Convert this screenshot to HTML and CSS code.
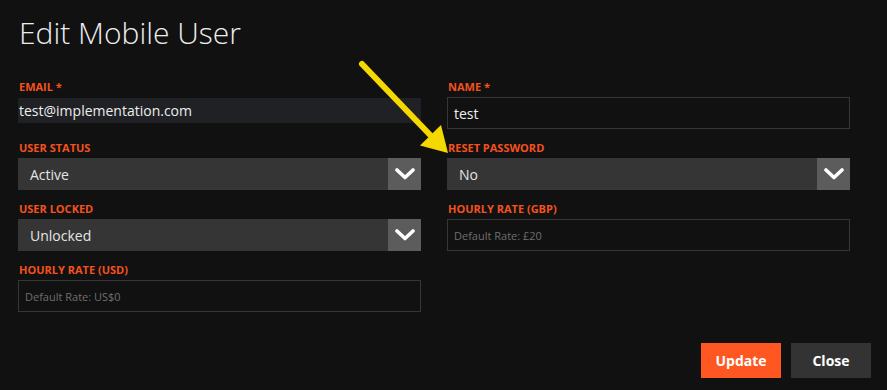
FILE: index.html
```html
<!DOCTYPE html>
<html lang="en">
<head>
<meta charset="utf-8">
<title>Edit Mobile User</title>
<link rel="stylesheet" href="styles.css">
</head>
<body>
<div class="modal">
  <h1 class="title">Edit Mobile User</h1>
  <form class="form">
    <div class="field">
      <label class="label">Email *</label>
      <div class="input input-filled">test@implementation.com</div>
    </div>
    <div class="field">
      <label class="label">Name *</label>
      <div class="input input-bordered">test</div>
    </div>
    <div class="field">
      <label class="label">User Status</label>
      <div class="select"><span class="select-value">Active</span><span class="select-arrow"><svg width="20" height="12" viewBox="0 0 20 12"><path d="M2 2 L10 9.5 L18 2" fill="none" stroke="#fff" stroke-width="3.6" stroke-linecap="round" stroke-linejoin="round"/></svg></span></div>
    </div>
    <div class="field">
      <label class="label">Reset Password</label>
      <div class="select"><span class="select-value">No</span><span class="select-arrow"><svg width="20" height="12" viewBox="0 0 20 12"><path d="M2 2 L10 9.5 L18 2" fill="none" stroke="#fff" stroke-width="3.6" stroke-linecap="round" stroke-linejoin="round"/></svg></span></div>
    </div>
    <div class="field">
      <label class="label">User Locked</label>
      <div class="select"><span class="select-value">Unlocked</span><span class="select-arrow"><svg width="20" height="12" viewBox="0 0 20 12"><path d="M2 2 L10 9.5 L18 2" fill="none" stroke="#fff" stroke-width="3.6" stroke-linecap="round" stroke-linejoin="round"/></svg></span></div>
    </div>
    <div class="field">
      <label class="label">Hourly Rate (GBP)</label>
      <div class="input input-bordered placeholder">Default Rate: £20</div>
    </div>
    <div class="field">
      <label class="label">Hourly Rate (USD)</label>
      <div class="input input-bordered placeholder">Default Rate: US$0</div>
    </div>
  </form>
  <div class="footer">
    <button class="btn btn-primary" type="button">Update</button>
    <button class="btn btn-secondary" type="button">Close</button>
  </div>
  <svg class="annotation" width="887" height="390" viewBox="0 0 887 390">
    <line x1="362" y1="64" x2="433" y2="138" stroke="#f5d800" stroke-width="6" stroke-linecap="round"/>
    <polygon points="448,153 420,145.5 441,125" fill="#f5d800"/>
  </svg>
</div>
</body>
</html>
```

FILE: styles.css
```css
html, body {
  margin: 0;
  padding: 0;
  background: #111111;
}

body {
  font-family: "Open Sans", "Noto Sans", sans-serif;
  color: #e8e8e8;
}

.modal {
  position: relative;
  width: 887px;
  height: 390px;
  box-sizing: border-box;
  padding: 13px 16px 0 18px;
}

.title {
  margin: 0 0 0 1px;
  font-size: 30px;
  line-height: 40px;
  font-weight: 300;
  color: #eeeeee;
}

.form {
  margin-top: 24px;
  display: grid;
  grid-template-columns: 403px 403px;
  column-gap: 26px;
  row-gap: 9px;
  align-items: start;
}

.field {
  display: flex;
  flex-direction: column;
}

.label {
  display: block;
  font-size: 11px;
  line-height: 15px;
  font-weight: 700;
  text-transform: uppercase;
  color: #f4511e;
  margin: 2px 0 3px 1px;
}

.input {
  box-sizing: border-box;
  display: flex;
  align-items: center;
  font-size: 14px;
  color: #eeeeee;
}

.input-filled {
  height: 25px;
  margin-top: 1px;
  background: #202124;
  padding-left: 1px;
}

.input-bordered {
  height: 32px;
  border: 1px solid #363636;
  padding-left: 6px;
}

.placeholder {
  font-size: 11px;
  color: #6f6f6f;
}

.select {
  height: 32px;
  display: flex;
  background: #353535;
}

.select-value {
  flex: 1;
  display: flex;
  align-items: center;
  padding-left: 12px;
  font-size: 14px;
  color: #e4e4e4;
}

.select-arrow {
  width: 33px;
  background: #5c5c5c;
  display: flex;
  align-items: center;
  justify-content: center;
}

.footer {
  display: flex;
  justify-content: flex-end;
  gap: 10px;
  margin-top: 31px;
}

.btn {
  width: 80px;
  height: 35px;
  border: none;
  padding: 0;
  font-family: "Open Sans", "Noto Sans", sans-serif;
  font-size: 14px;
  font-weight: 700;
  color: #ffffff;
  cursor: pointer;
}

.btn-primary {
  background: #ff5722;
}

.btn-secondary {
  background: #333333;
}

.annotation {
  position: absolute;
  left: 0;
  top: 0;
  pointer-events: none;
}
```
